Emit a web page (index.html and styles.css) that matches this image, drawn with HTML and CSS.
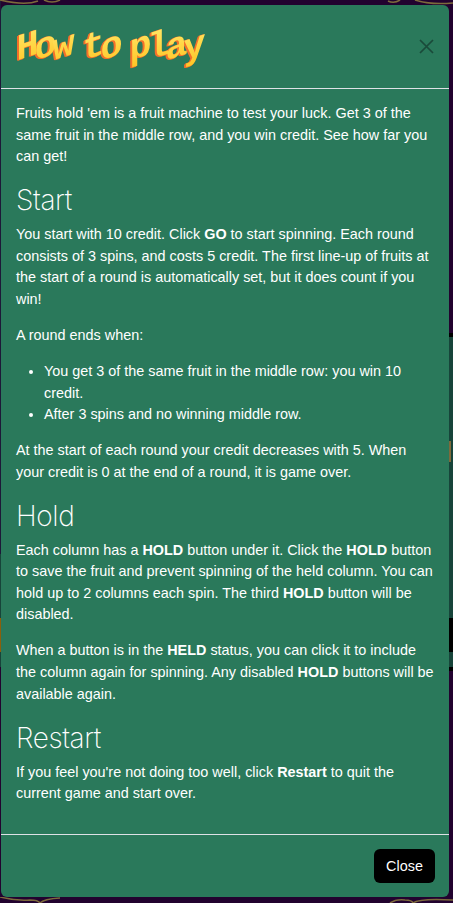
FILE: index.html
```html
<!DOCTYPE html>
<html lang="en">
<head>
<meta charset="utf-8">
<title>How to play</title>
<link rel="stylesheet" href="styles.css">
</head>
<body>
<div class="backdrop" aria-hidden="true">
  <div class="strip strip-left"></div>
  <div class="strip strip-right"></div>
  <div class="tick"></div>
  <svg class="flourish flourish-top" viewBox="0 0 453 6"><path d="M0 0Q25 6 38 1M44 0Q52 4 60 0M388 1Q394 4 400 0M415 0Q430 5 453 3" fill="none" stroke="#7d6a3c" stroke-width="1.6"/></svg>
  <svg class="flourish flourish-bottom" viewBox="0 0 453 6"><path d="M0 0Q15 4 30 3Q38 3 40 6M40 6Q44 2 60 1M390 6Q396 2 405 3Q412 3 413 6M413 6Q420 1 453 3" fill="none" stroke="#7d6a3c" stroke-width="1.6"/></svg>
</div>
<main class="modal">
  <header class="modal-header">
    <h1 class="modal-title"><span class="word"><span class="l">H</span><span class="l">o</span><span class="l">w</span></span> <span class="word"><span class="l">t</span><span class="l">o</span></span> <span class="word"><span class="l">p</span><span class="l">l</span><span class="l">a</span><span class="l">y</span></span></h1>
    <button class="close-x" aria-label="Close"><svg viewBox="0 0 15 15" width="15" height="15"><path d="M1 1L14 14M14 1L1 14" stroke="#1a4a3a" stroke-width="1.7" fill="none"/></svg></button>
  </header>
  <section class="modal-body">
    <p>Fruits hold 'em is a fruit machine to test your luck. Get 3 of the same fruit in the middle row, and you win credit. See how far you can get!</p>
    <h2>Start</h2>
    <p>You start with 10 credit. Click <b>GO</b> to start spinning. Each round consists of 3 spins, and costs 5 credit. The first line-up of fruits at the start of a round is automatically set, but it does count if you win!</p>
    <p>A round ends when:</p>
    <ul>
      <li>You get 3 of the same fruit in the middle row: you win 10 credit.</li>
      <li>After 3 spins and no winning middle row.</li>
    </ul>
    <p>At the start of each round your credit decreases with 5. When your credit is 0 at the end of a round, it is game over.</p>
    <h2>Hold</h2>
    <p>Each column has a <b>HOLD</b> button under it. Click the <b>HOLD</b> button to save the fruit and prevent spinning of the held column. You can hold up to 2 columns each spin. The third <b>HOLD</b> button will be disabled.</p>
    <p>When a button is in the <b>HELD</b> status, you can click it to include the column again for spinning. Any disabled <b>HOLD</b> buttons will be available again.</p>
    <h2>Restart</h2>
    <p>If you feel you're not doing too well, click <b>Restart</b> to quit the current game and start over.</p>
  </section>
  <footer class="modal-footer">
    <button class="btn-close">Close</button>
  </footer>
</main>
</body>
</html>
```
FILE: styles.css
```css
html, body {
  margin: 0;
  height: 100%;
}
body {
  background: #22022f;
  font-family: "Liberation Sans", Arial, sans-serif;
  font-size: 14.4px;
  line-height: 21.6px;
  color: #fff;
  padding: 5px 4px 6px 1px;
  box-sizing: border-box;
  overflow: hidden;
  position: relative;
}
.backdrop {
  position: absolute;
  inset: 0;
}
.strip {
  position: absolute;
  top: 0;
  bottom: 0;
}
.strip-right {
  right: 0;
  width: 4px;
  background: linear-gradient(180deg,
    #22022f 333px, #000 333px, #000 337px,
    #17443a 337px, #17443a 618px, #000 618px, #000 652px,
    #17443a 652px, #17443a 667px, #000 667px, #000 671px,
    #22022f 671px);
}
.strip-left {
  left: 0;
  width: 1px;
  background: linear-gradient(180deg,
    #1d1838 554px, #17443a 554px, #17443a 618px,
    #8a5f0c 618px, #8a5f0c 652px, #17443a 652px, #17443a 667px,
    #22022f 667px);
}
.tick {
  position: absolute;
  top: 441px;
  left: 449px;
  width: 2px;
  height: 21px;
  background: #7d6a3c;
}
.flourish {
  position: absolute;
  left: 0;
  width: 453px;
  height: 6px;
}
.flourish-top { top: 0; }
.flourish-bottom { bottom: 0; }
.modal {
  position: relative;
  height: 892px;
  background: #2a795b;
  border-radius: 6px;
  display: flex;
  flex-direction: column;
}
.modal-header {
  height: 84px;
  flex: none;
  box-sizing: border-box;
  border-bottom: 1px solid #dee2e6;
  display: flex;
  align-items: center;
  justify-content: space-between;
  padding: 0 15px 0 18px;
}
.modal-title {
  margin: 0;
  font-family: "Liberation Mono", monospace;
  font-weight: 700;
  font-size: 37px;
  line-height: 44px;
  white-space: nowrap;
  display: flex;
  gap: 12px;
  filter: drop-shadow(-1px 0 0 #f4702a) drop-shadow(-1px 1px 0 #f4702a);
}
.word { display: inline-flex; }
.l {
  display: inline-block;
  width: 23px;
  margin: 0 -2.6px;
  text-align: center;
  transform: skewY(-18deg);
  background: linear-gradient(180deg, #ffe96a, #ffc21f);
  -webkit-background-clip: text;
  background-clip: text;
  color: transparent;
}
.close-x {
  background: none;
  border: 0;
  padding: 0;
  width: 15px;
  height: 15px;
  line-height: 0;
}
.modal-body {
  flex: 1;
  padding: 14px 15px 0;
}
p { margin: 0 0 14.4px; }
h2 {
  margin: 0 0 7px;
  padding-top: 1px;
  font-family: Inter, sans-serif;
  font-weight: 150;
  font-size: 28px;
  line-height: 34px;
  letter-spacing: -0.4px;
}
ul {
  margin: 0 0 14.4px;
  padding-left: 28px;
}
.modal-footer {
  flex: none;
  height: 63px;
  box-sizing: border-box;
  border-top: 1px solid #dee2e6;
  display: flex;
  align-items: center;
  justify-content: flex-end;
  padding: 0 14px;
}
.btn-close {
  width: 61px;
  height: 34px;
  background: #000;
  color: #fff;
  border: 0;
  border-radius: 6px;
  font: 14.4px "Liberation Sans", Arial, sans-serif;
}
```
